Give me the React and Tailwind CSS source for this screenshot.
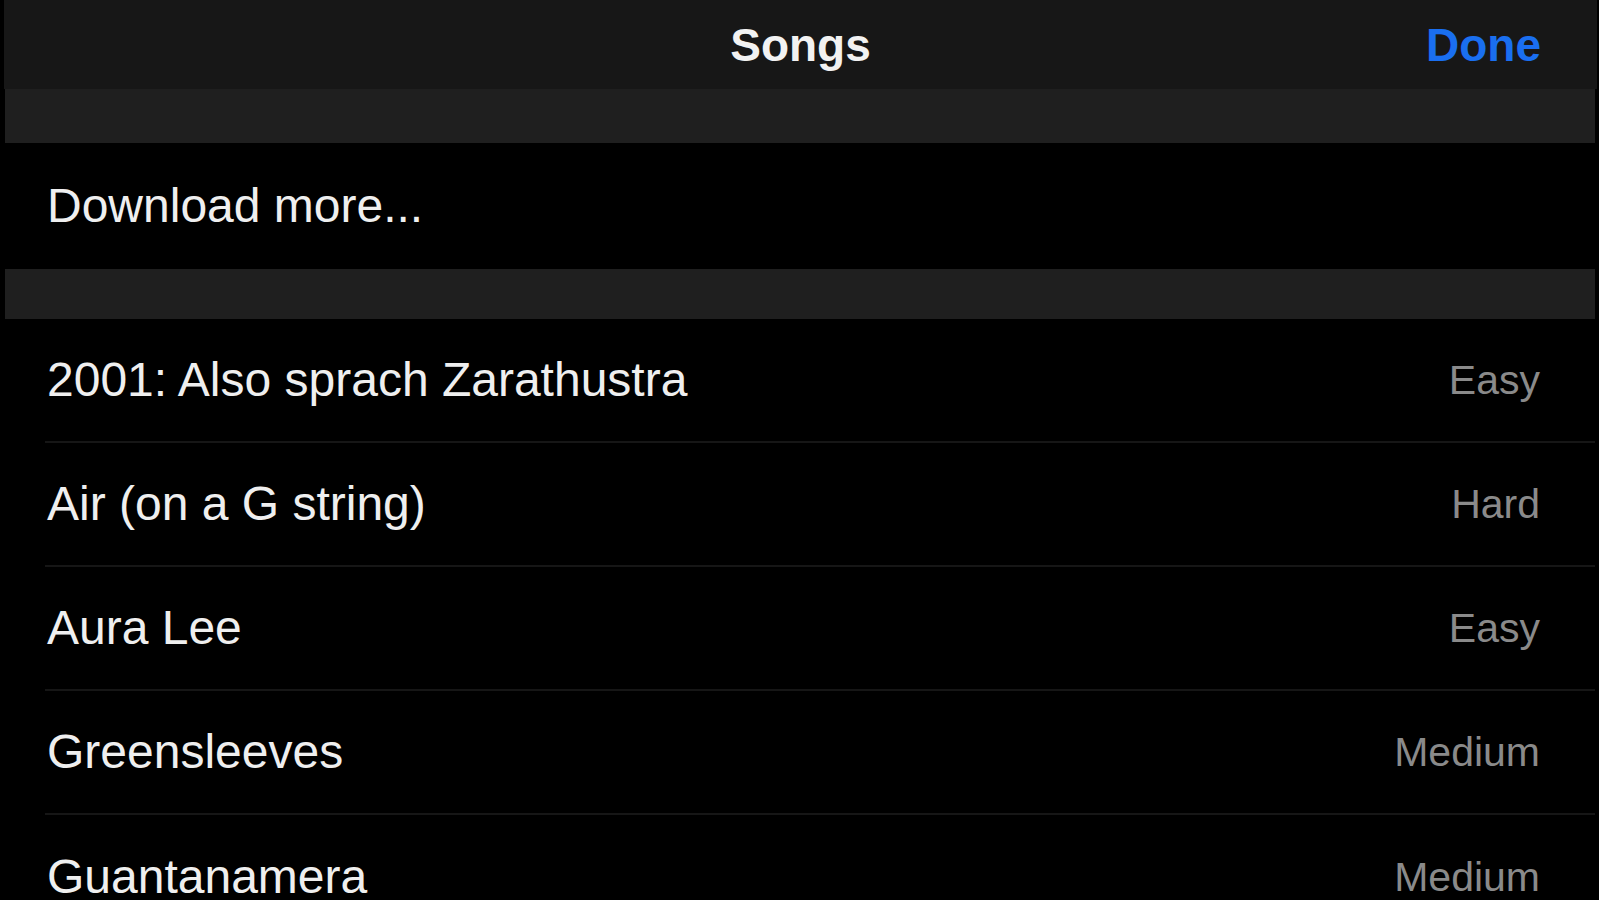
export default function App() {
  const songs = [
    ["2001: Also sprach Zarathustra", "Easy"],
    ["Air (on a G string)", "Hard"],
    ["Aura Lee", "Easy"],
    ["Greensleeves", "Medium"],
    ["Guantanamera", "Medium"],
  ];
  return (
    <div
      className="w-[1599px] h-[900px] overflow-hidden bg-black pl-[5px] pr-[4px]"
      style={{ fontFamily: '"Liberation Sans", Arial, sans-serif' }}
    >
      <div className="h-[89px] bg-[#171717] flex items-center justify-between relative -ml-[1px] -mr-[2px]">
        <div className="absolute inset-0 flex items-center justify-center">
          <span className="text-[46px] font-bold text-[#f2f2f2] leading-none">Songs</span>
        </div>
        <div className="flex-1" />
        <span className="relative text-[46px] font-bold text-[#1a6ff0] leading-none mr-[56px]">Done</span>
      </div>
      <div className="h-[54px] bg-[#1f1f1f]" />
      <div className="h-[126px] flex items-center pl-[42px]">
        <span className="text-[48px] text-[#efefef] leading-none">Download more...</span>
      </div>
      <div className="h-[50px] bg-[#1f1f1f]" />
      <div className="flex flex-col">
        {songs.map(([name, level], i) => (
          <div key={name} className="pl-[40px]">
            <div
              className={
                "h-[124px] flex items-center justify-between pl-[2px] pr-[55px] " +
                (i < songs.length - 1 ? "border-b-2 border-[#161616]" : "")
              }
            >
              <span className="text-[48px] text-[#efefef] leading-none">{name}</span>
              <span className="text-[41px] text-[#8a8a8a] leading-none">{level}</span>
            </div>
          </div>
        ))}
      </div>
    </div>
  );
}
